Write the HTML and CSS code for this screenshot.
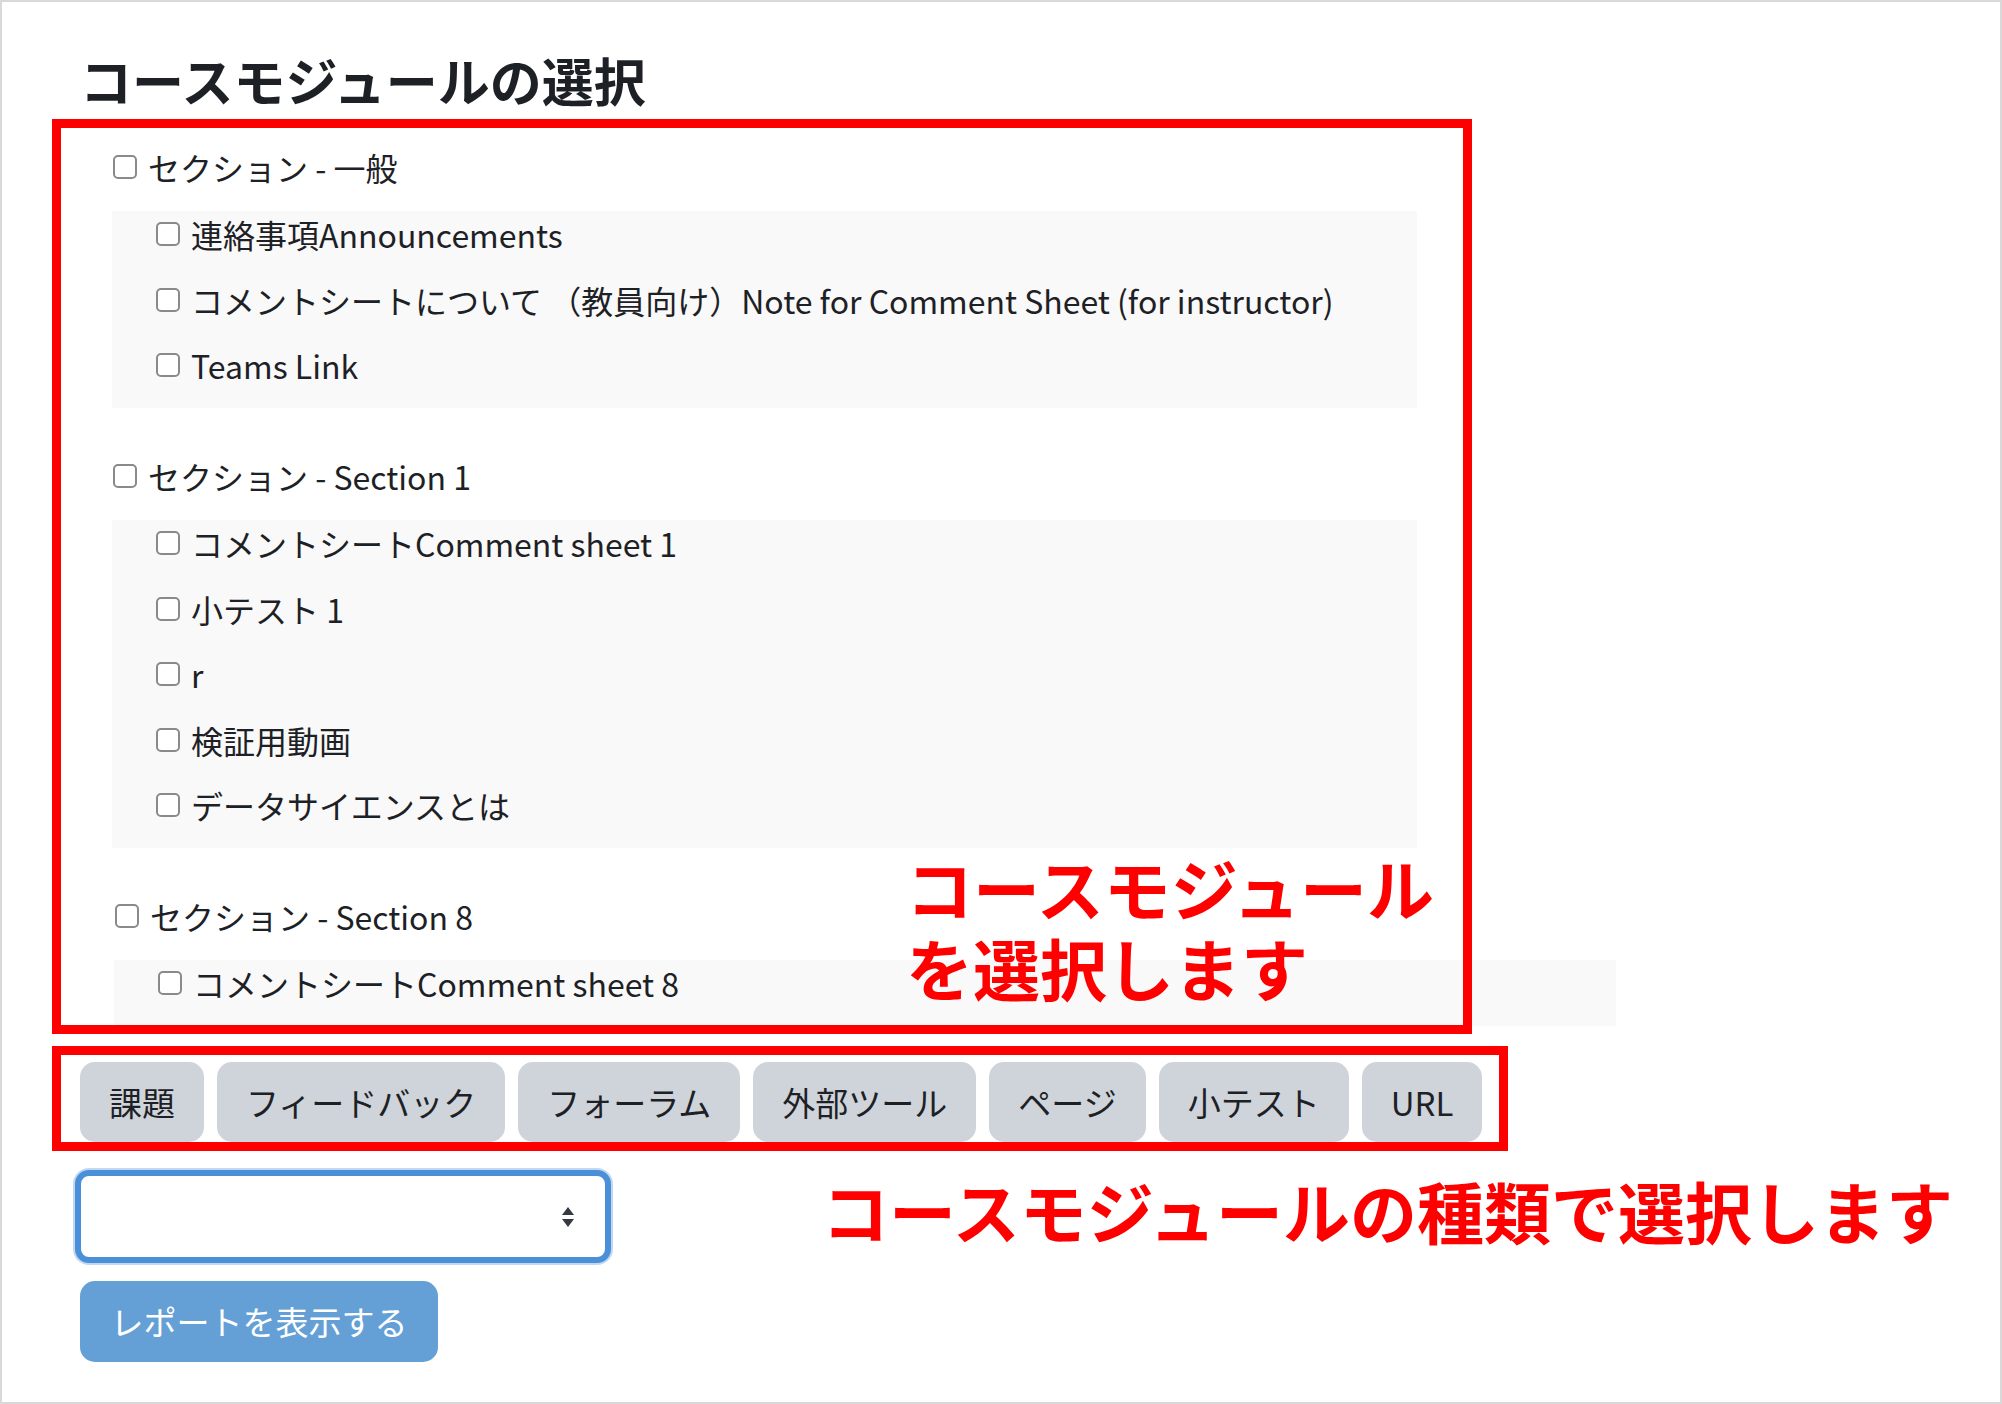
FILE: index.html
```html
<!DOCTYPE html>
<html lang="ja">
<head>
<meta charset="utf-8">
<title>コースモジュールの選択</title>
<link rel="stylesheet" href="styles.css">
</head>
<body>
<div class="page">
  <div class="content">
    <h2 class="title">コースモジュールの選択</h2>

    <div class="sections">
      <div class="section">
        <label class="row head"><input type="checkbox" class="cb"><span>セクション - 一般</span></label>
        <div class="mods">
          <label class="row"><input type="checkbox" class="cb"><span>連絡事項Announcements</span></label>
          <label class="row"><input type="checkbox" class="cb"><span>コメントシートについて （教員向け）Note for Comment Sheet (for instructor)</span></label>
          <label class="row"><input type="checkbox" class="cb"><span>Teams Link</span></label>
        </div>
      </div>

      <div class="section">
        <label class="row head"><input type="checkbox" class="cb"><span>セクション - Section 1</span></label>
        <div class="mods">
          <label class="row"><input type="checkbox" class="cb"><span>コメントシートComment sheet 1</span></label>
          <label class="row"><input type="checkbox" class="cb"><span>小テスト 1</span></label>
          <label class="row"><input type="checkbox" class="cb"><span>r</span></label>
          <label class="row"><input type="checkbox" class="cb"><span>検証用動画</span></label>
          <label class="row"><input type="checkbox" class="cb"><span>データサイエンスとは</span></label>
        </div>
      </div>

      <div class="section shifted">
        <label class="row head"><input type="checkbox" class="cb"><span>セクション - Section 8</span></label>
        <div class="mods wide">
          <label class="row"><input type="checkbox" class="cb"><span>コメントシートComment sheet 8</span></label>
        </div>
      </div>
    </div>

    <div class="types">
      <button class="type-btn">課題</button>
      <button class="type-btn">フィードバック</button>
      <button class="type-btn">フォーラム</button>
      <button class="type-btn">外部ツール</button>
      <button class="type-btn">ページ</button>
      <button class="type-btn">小テスト</button>
      <button class="type-btn">URL</button>
    </div>

    <div class="select">
      <svg class="arrow" width="12" height="20" viewBox="0 0 12 20" aria-hidden="true">
        <polygon points="6,0 12,8 0,8" fill="#343a40"/>
        <polygon points="0,12 12,12 6,20" fill="#343a40"/>
      </svg>
    </div>

    <button class="report-btn">レポートを表示する</button>
  </div>

  <div class="mark mark-modules"></div>
  <div class="mark mark-types"></div>
  <div class="note note-modules">コースモジュール<br>を選択します</div>
  <div class="note note-types">コースモジュールの種類で選択します</div>
</div>
</body>
</html>
```

FILE: styles.css
```css
* {
  box-sizing: border-box;
}

html, body {
  margin: 0;
  padding: 0;
  background: #ffffff;
}

body {
  font-family: "Noto Sans CJK JP", "Noto Sans", sans-serif;
  color: #1d2125;
}

.page {
  position: relative;
  width: 2002px;
  height: 1404px;
  border: 2px solid #d9d9d9;
  background: #ffffff;
  overflow: hidden;
}

.content {
  padding: 48px 0 0 78px;
  display: flex;
  flex-direction: column;
  align-items: flex-start;
}

.title {
  margin: 0;
  font-size: 52px;
  line-height: 60px;
  font-weight: 700;
  color: #1d2125;
}

.sections {
  margin: 34px 0 0 32px;
  display: flex;
  flex-direction: column;
  gap: 45px;
}

.section {
  display: flex;
  flex-direction: column;
  align-items: flex-start;
  gap: 21px;
}

.section.shifted {
  margin-left: 2px;
}

.row {
  display: flex;
  align-items: center;
  height: 46px;
  font-size: 32px;
  line-height: 46px;
  white-space: nowrap;
  color: #1d2125;
}

.row.head {
  padding-left: 1px;
}

.cb {
  appearance: none;
  -webkit-appearance: none;
  width: 24px;
  height: 24px;
  margin: 0 11px 0 0;
  border: 2px solid #8a8a8a;
  border-radius: 5px;
  background: #ffffff;
  flex: none;
}

.mods {
  width: 1305px;
  background: #f9f9f9;
  padding: 0 0 20px 44px;
  display: flex;
  flex-direction: column;
  align-items: flex-start;
  gap: 19.5px;
}

.mods.wide {
  width: 1502px;
}

.types {
  margin-top: 36px;
  display: flex;
  gap: 13px;
}

.type-btn {
  height: 80px;
  padding: 0 29px;
  border: none;
  border-radius: 15px;
  background: #ced4da;
  color: #1d2125;
  font-family: "Noto Sans CJK JP", "Noto Sans", sans-serif;
  font-size: 33px;
  line-height: 80px;
}

.select {
  margin: 28px 0 0 -5px;
  width: 536px;
  height: 93px;
  border: 6px solid #4a90d9;
  border-radius: 14px;
  box-shadow: 0 0 0 2px rgba(74, 144, 217, 0.35);
  background: #ffffff;
  display: flex;
  align-items: center;
  justify-content: flex-end;
  padding-right: 31px;
}

.arrow {
  display: block;
}

.report-btn {
  margin-top: 18px;
  width: 358px;
  height: 81px;
  padding: 0;
  border: none;
  border-radius: 15px;
  background: #64a0d6;
  color: #ffffff;
  font-family: "Noto Sans CJK JP", "Noto Sans", sans-serif;
  font-size: 33px;
  line-height: 81px;
  text-align: center;
}

/* annotation overlays */
.mark {
  position: absolute;
  border: 9px solid #ff0000;
  pointer-events: none;
}

.mark-modules {
  left: 50px;
  top: 117px;
  width: 1420px;
  height: 915px;
}

.mark-types {
  left: 50px;
  top: 1044px;
  width: 1456px;
  height: 105px;
}

.note {
  position: absolute;
  color: #ff0000;
  font-weight: 700;
  white-space: nowrap;
}

.note-modules {
  left: 904px;
  top: 845px;
  font-size: 67px;
  line-height: 80px;
}

.note-types {
  left: 820px;
  top: 1174px;
  font-size: 67px;
  line-height: 67px;
}
```
